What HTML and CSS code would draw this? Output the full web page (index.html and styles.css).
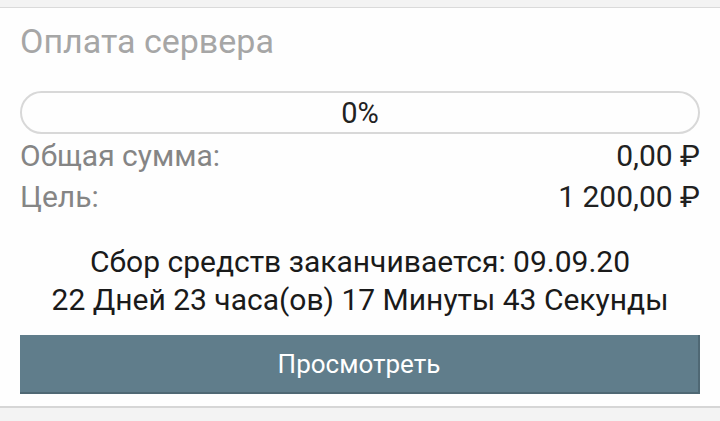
FILE: index.html
```html
<!DOCTYPE html>
<html lang="ru">
<head>
    <meta charset="UTF-8">
    <meta name="viewport" content="width=device-width, initial-scale=1.0">
    <title>Оплата сервера</title>
    <link rel="stylesheet" href="styles.css">
</head>
<body>
    <div class="edge edge-top"></div>
    <div class="card">
        <h2 class="card-title">Оплата сервера</h2>
        <div class="progress">
            <span class="progress-label">0%</span>
        </div>
        <div class="totals">
            <div class="row">
                <span class="row-label">Общая сумма:</span>
                <span class="row-value">0,00 ₽</span>
            </div>
            <div class="row">
                <span class="row-label">Цель:</span>
                <span class="row-value">1 200,00 ₽</span>
            </div>
        </div>
        <div class="deadline">
            <p>Сбор средств заканчивается: 09.09.20</p>
            <p>22 Дней 23 часа(ов) 17 Минуты 43 Секунды</p>
        </div>
        <button type="button" class="view-button">Просмотреть</button>
    </div>
    <div class="edge edge-bottom"></div>
</body>
</html>
```

FILE: styles.css
```css
body {
    font-family: Roboto, "Noto Sans", Arial, sans-serif;
    background-color: #ffffff;
    margin: 0;
    padding: 0;
    width: 720px;
    height: 421px;
    overflow: hidden;
}

.edge {
    background: #f3f3f3;
}

.edge-top {
    height: 7px;
    border-bottom: 1px solid #dadada;
}

.edge-bottom {
    height: 20px;
    border-top: 2px solid #d6d6d6;
}

.card {
    background: #fefefe;
    padding: 13px 20px 12px;
}

.card-title {
    font-size: 34px;
    font-weight: 400;
    color: #a6a6a6;
    margin: 0;
    line-height: 40px;
}

.progress {
    margin-top: 30px;
    height: 39px;
    border: 2px solid #d8d8d8;
    border-radius: 22px;
    display: flex;
    justify-content: center;
    align-items: center;
}

.progress-label {
    font-size: 29px;
    color: #222;
}

.totals {
    margin-top: 1px;
}

.row {
    display: flex;
    justify-content: space-between;
    font-size: 30px;
    line-height: 41px;
}

.row-label {
    color: #858585;
}

.row-value {
    color: #212121;
}

.deadline {
    margin-top: 26px;
    text-align: center;
    font-size: 30px;
    color: #1a1a1a;
}

.deadline p {
    margin: 0;
    line-height: 38px;
}

.view-button {
    display: block;
    width: 100%;
    margin-top: 16px;
    height: 59px;
    background: #607d8b;
    color: #ffffff;
    font-family: inherit;
    font-size: 26px;
    border: none;
    border-right: 2px solid #4f6874;
    border-bottom: 2px solid #4f6874;
    border-radius: 0;
}
```
